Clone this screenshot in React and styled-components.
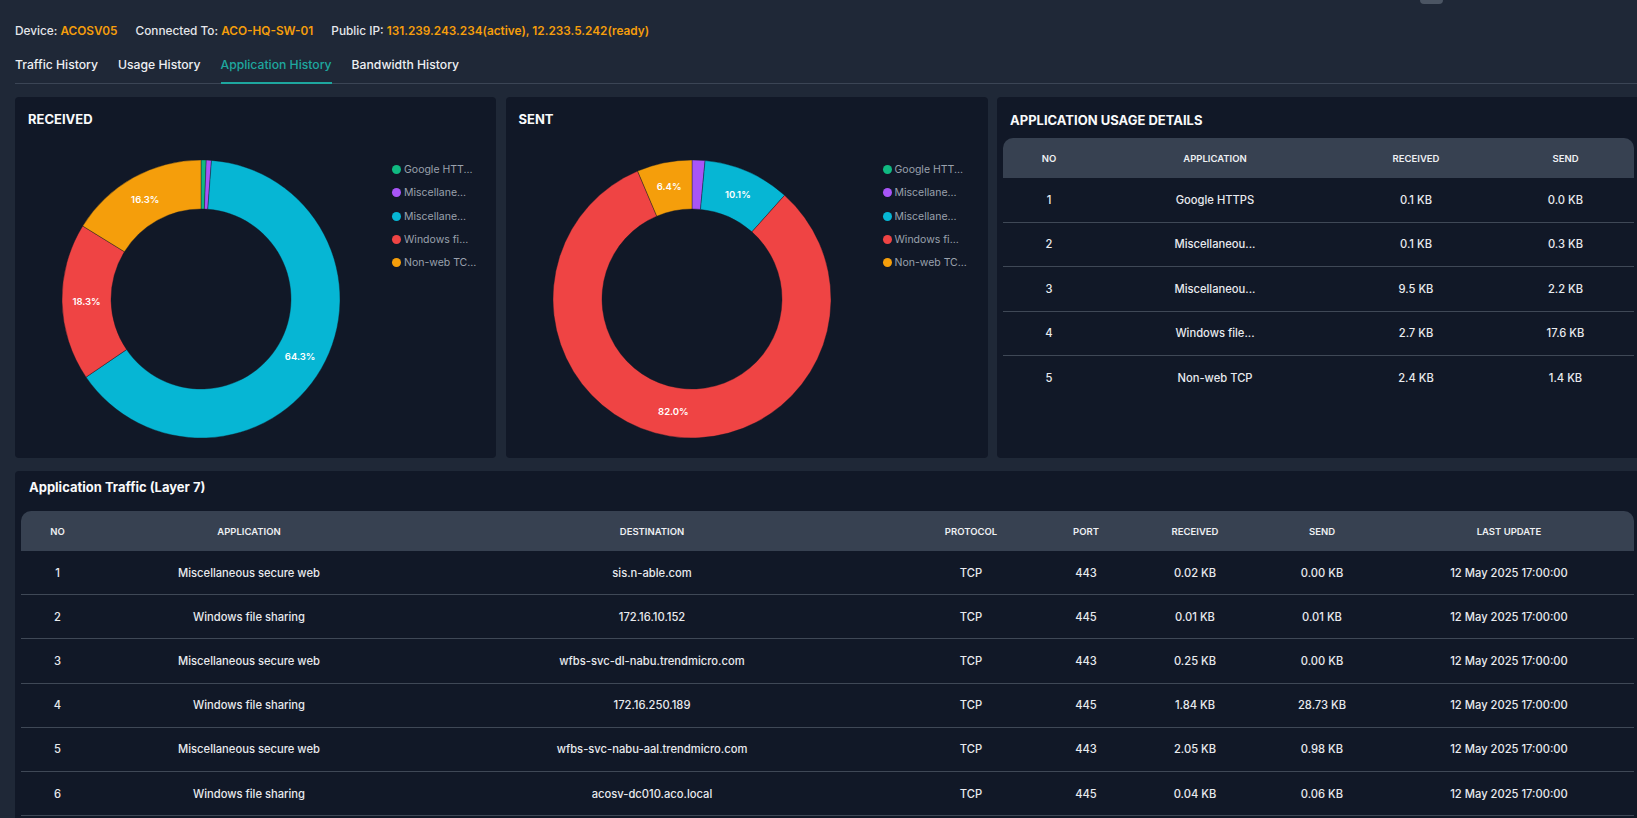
import React from "react";
import styled, { createGlobalStyle } from "styled-components";

const GlobalStyle = createGlobalStyle`
  html, body {
    margin: 0;
    padding: 0;
    background: #1f2837;
    overflow: hidden;
    font-family: Inter, "Noto Sans", sans-serif;
    color: #e5e7eb;
  }
`;

const COLORS = {
  green: "#10b981",
  purple: "#a855f7",
  cyan: "#06b6d4",
  red: "#ef4444",
  orange: "#f59e0b",
};

const LEGEND = [
  { label: "Google HTT...", color: COLORS.green },
  { label: "Miscellane...", color: COLORS.purple },
  { label: "Miscellane...", color: COLORS.cyan },
  { label: "Windows fi...", color: COLORS.red },
  { label: "Non-web TC...", color: COLORS.orange },
];

const RECEIVED = [0.6, 0.6, 64.3, 18.3, 16.2];
const RECEIVED_LABELS = [null, null, "64.3%", "18.3%", "16.3%"];
const SENT = [0, 1.5, 10.1, 82.0, 6.4];
const SENT_LABELS = [null, null, "10.1%", "82.0%", "6.4%"];

const USAGE = [
  ["1", "Google HTTPS", "0.1 KB", "0.0 KB"],
  ["2", "Miscellaneou...", "0.1 KB", "0.3 KB"],
  ["3", "Miscellaneou...", "9.5 KB", "2.2 KB"],
  ["4", "Windows file...", "2.7 KB", "17.6 KB"],
  ["5", "Non-web TCP", "2.4 KB", "1.4 KB"],
];

const DATE = "12 May 2025 17:00:00";
const TRAFFIC = [
  ["1", "Miscellaneous secure web", "sis.n-able.com", "TCP", "443", "0.02 KB", "0.00 KB", DATE],
  ["2", "Windows file sharing", "172.16.10.152", "TCP", "445", "0.01 KB", "0.01 KB", DATE],
  ["3", "Miscellaneous secure web", "wfbs-svc-dl-nabu.trendmicro.com", "TCP", "443", "0.25 KB", "0.00 KB", DATE],
  ["4", "Windows file sharing", "172.16.250.189", "TCP", "445", "1.84 KB", "28.73 KB", DATE],
  ["5", "Miscellaneous secure web", "wfbs-svc-nabu-aal.trendmicro.com", "TCP", "443", "2.05 KB", "0.98 KB", DATE],
  ["6", "Windows file sharing", "acosv-dc010.aco.local", "TCP", "445", "0.04 KB", "0.06 KB", DATE],
];

const Page = styled.div`
  position: relative;
  width: 1625px;
  padding: 21px 0 40px 15px;
`;

const TopPill = styled.div`
  position: absolute;
  top: 0;
  left: 1420px;
  width: 23px;
  height: 4px;
  border-radius: 0 0 4px 4px;
  background: #4b5563;
`;

const InfoBar = styled.div`
  display: flex;
  gap: 18px;
  font-size: 11.8px;
  font-weight: 500;
  line-height: 20px;
`;

const Value = styled.span`
  color: #f59e0b;
  font-weight: 600;
`;

const TabBar = styled.div`
  display: flex;
  gap: 20px;
  margin-top: 14px;
  border-bottom: 1px solid #3b4555;
`;

const Tab = styled.div`
  font-size: 12.2px;
  font-weight: 500;
  line-height: 20px;
  padding-bottom: 7px;
  margin-bottom: -1px;
  color: ${(p) => (p.$active ? "#1ea79f" : "#eef0f3")};
  border-bottom: 2px solid ${(p) => (p.$active ? "#1ea79f" : "transparent")};
`;

const TopGrid = styled.div`
  display: grid;
  grid-template-columns: 481px 482px 1fr;
  column-gap: 9.5px;
  height: 361px;
  margin-top: 13px;
`;

const Panel = styled.div`
  background: #111827;
  border-radius: 4px;
  padding: ${(p) => p.$pad || "14px 13px"};
  box-sizing: border-box;
  overflow: hidden;
`;

const PanelTitle = styled.div`
  font-size: 13px;
  font-weight: 700;
  line-height: 16px;
  color: #f9fafb;
  padding-left: ${(p) => p.$indent || "0"};
  text-transform: ${(p) => (p.$upper ? "uppercase" : "none")};
`;

const ChartRow = styled.div`
  display: flex;
  align-items: flex-start;
  margin-top: 28px;
`;

const Legend = styled.div`
  display: flex;
  flex-direction: column;
  padding-top: 3px;
  margin-left: ${(p) => p.$offset}px;
`;

const LegendItem = styled.div`
  display: flex;
  align-items: center;
  gap: 3px;
  height: 23.3px;
  font-size: 10.5px;
  color: #9aa1ad;
  white-space: nowrap;
`;

const Dot = styled.span`
  width: 9px;
  height: 9px;
  border-radius: 50%;
  background: ${(p) => p.$color};
`;

const Table = styled.div`
  margin-top: ${(p) => p.$top || "0"};
`;

const HeadRow = styled.div`
  display: grid;
  grid-template-columns: ${(p) => p.$cols};
  height: 40px;
  align-items: center;
  background: #374151;
  border-radius: 10px 10px 0 0;
`;

const HeadCell = styled.div`
  text-align: center;
  font-size: 9.5px;
  font-weight: 600;
  color: #eef0f3;
  text-transform: uppercase;
`;

const BodyRow = styled.div`
  display: grid;
  grid-template-columns: ${(p) => p.$cols};
  height: ${(p) => p.$h}px;
  align-items: center;
  box-sizing: border-box;
  border-bottom: ${(p) => (p.$last ? "none" : "1px solid #3f4856")};
`;

const Cell = styled.div`
  text-align: center;
  font-size: 11.2px;
  font-weight: 500;
  color: #e8eaee;
  white-space: nowrap;
`;

const BottomPanel = styled(Panel)`
  margin-top: 13px;
`;

function polar(cx, cy, r, pct) {
  const a = (pct / 100) * Math.PI * 2;
  return [cx + r * Math.sin(a), cy - r * Math.cos(a)];
}

function slicePath(cx, cy, R, r, from, to) {
  const large = to - from > 50 ? 1 : 0;
  const [x1, y1] = polar(cx, cy, R, from);
  const [x2, y2] = polar(cx, cy, R, to);
  const [x3, y3] = polar(cx, cy, r, to);
  const [x4, y4] = polar(cx, cy, r, from);
  return `M${x1} ${y1} A${R} ${R} 0 ${large} 1 ${x2} ${y2} L${x3} ${y3} A${r} ${r} 0 ${large} 0 ${x4} ${y4} Z`;
}

const Donut = ({ values, labels }) => {
  const cx = 173;
  const cy = 144;
  const R = 139;
  const r = 90;
  let acc = 0;
  const colors = LEGEND.map((l) => l.color);
  const slices = values.map((v, i) => {
    const from = acc;
    acc += v;
    return { from, to: acc, color: colors[i], label: labels[i] };
  });
  return (
    <svg width="346" height="288" viewBox="0 0 346 288">
      {slices.map((s, i) =>
        s.to - s.from > 0 ? (
          <path
            key={i}
            d={slicePath(cx, cy, R, r, s.from, s.to)}
            fill={s.color}
            stroke="#111827"
            strokeWidth="0.4"
          />
        ) : null
      )}
      {slices.map((s, i) => {
        if (!s.label) return null;
        const [x, y] = polar(cx, cy, (R + r) / 2, (s.from + s.to) / 2);
        return (
          <text
            key={"t" + i}
            x={x}
            y={y}
            textAnchor="middle"
            dominantBaseline="central"
            fontSize="9.5"
            fontWeight="600"
            fill="#ffffff"
            fontFamily="Inter, sans-serif"
          >
            {s.label}
          </text>
        );
      })}
    </svg>
  );
};

const ChartPanel = ({ title, values, labels }) => (
  <Panel>
    <PanelTitle $upper>{title}</PanelTitle>
    <ChartRow>
      <Donut values={values} labels={labels} />
      <Legend $offset={18}>
        {LEGEND.map((l, i) => (
          <LegendItem key={i}>
            <Dot $color={l.color} />
            {l.label}
          </LegendItem>
        ))}
      </Legend>
    </ChartRow>
  </Panel>
);

const USAGE_COLS = "92px 240px 162px 1fr";
const TRAFFIC_COLS = "73px 310px 496px 142px 88px 130px 124px 1fr";

export default function App() {
  return (
    <>
      <GlobalStyle />
      <Page>
        <TopPill />
        <InfoBar>
          <span>
            Device: <Value>ACOSV05</Value>
          </span>
          <span>
            Connected To: <Value>ACO-HQ-SW-01</Value>
          </span>
          <span>
            Public IP: <Value>131.239.243.234(active), 12.233.5.242(ready)</Value>
          </span>
        </InfoBar>
        <TabBar>
          <Tab>Traffic History</Tab>
          <Tab>Usage History</Tab>
          <Tab $active>Application History</Tab>
          <Tab>Bandwidth History</Tab>
        </TabBar>

        <TopGrid>
          <ChartPanel title="Received" values={RECEIVED} labels={RECEIVED_LABELS} />
          <ChartPanel title="Sent" values={SENT} labels={SENT_LABELS} />
          <Panel $pad="15px 6px">
            <PanelTitle $upper $indent="7px">
              Application Usage Details
            </PanelTitle>
            <Table $top="10px">
              <HeadRow $cols={USAGE_COLS}>
                {["No", "Application", "Received", "Send"].map((h) => (
                  <HeadCell key={h}>{h}</HeadCell>
                ))}
              </HeadRow>
              {USAGE.map((row, i) => (
                <BodyRow key={i} $cols={USAGE_COLS} $h={44.5} $last={i === USAGE.length - 1}>
                  {row.map((c, j) => (
                    <Cell key={j}>{c}</Cell>
                  ))}
                </BodyRow>
              ))}
            </Table>
          </Panel>
        </TopGrid>

        <BottomPanel $pad="8px 6px">
          <PanelTitle $indent="8px">Application Traffic (Layer 7)</PanelTitle>
          <Table $top="16px">
            <HeadRow $cols={TRAFFIC_COLS}>
              {["No", "Application", "Destination", "Protocol", "Port", "Received", "Send", "Last Update"].map(
                (h) => (
                  <HeadCell key={h}>{h}</HeadCell>
                )
              )}
            </HeadRow>
            {TRAFFIC.map((row, i) => (
              <BodyRow key={i} $cols={TRAFFIC_COLS} $h={44.2}>
                {row.map((c, j) => (
                  <Cell key={j}>{c}</Cell>
                ))}
              </BodyRow>
            ))}
          </Table>
        </BottomPanel>
      </Page>
    </>
  );
}
